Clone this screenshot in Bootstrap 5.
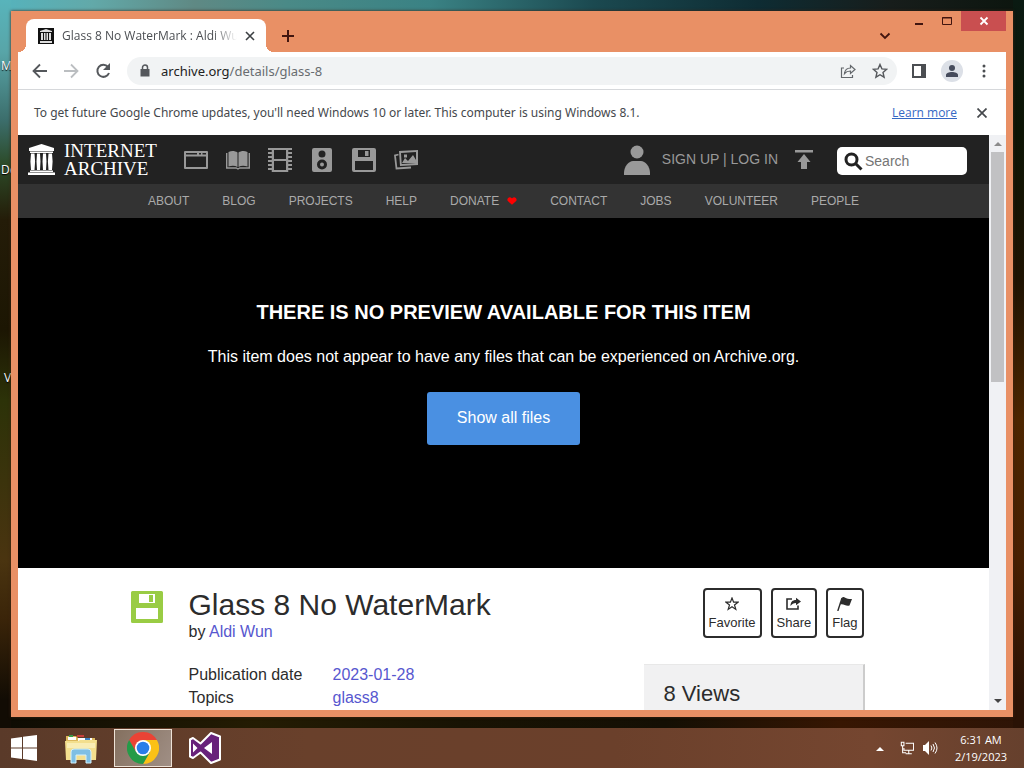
<!DOCTYPE html>
<html lang="en">
<head>
<meta charset="utf-8">
<meta name="viewport" content="width=device-width, initial-scale=1">
<title>Glass 8 No WaterMark : Aldi Wun</title>
<link href="https://cdn.jsdelivr.net/npm/bootstrap@5.3.0/dist/css/bootstrap.min.css" rel="stylesheet">
<style>
  body { font-family: "Liberation Sans", Arial, sans-serif; color: #2c2c2c; }
  svg { display: block; flex: none; }
  button { padding: 0; border: 0; background: none; color: inherit; }
  .ui-text { font-family: "Open Sans", "Segoe UI", sans-serif; font-size: 12px; line-height: 18px; }
  .desktop {
    background:
      linear-gradient(180deg, #58b4bb 0, #58a5a8 52px, #3c6e6c 120px, #2c4a28 165px, #241c08 220px, #1c1603 330px, #2c3208 400px, #4a3410 560px, #3a2409 620px, #120c04 700px) 0 0 / 11px 100% no-repeat,
      linear-gradient(180deg, #0a1a12 0, #0d1505 130px, #1f1302 280px, #4d2600 420px, #482002 560px, #2a1205 700px) 100% 0 / 11px 100% no-repeat,
      linear-gradient(90deg, #55b3bd 0, #62a9a9 9%, #5f8984 19%, #4a8a87 28%, #3a8284 42%, #1b4950 58%, #0e2c33 74%, #171d1b 87%, #0c150e 100%) 0 0 / 100% 12px no-repeat,
      linear-gradient(90deg, #0d0b03, #241c03 25%, #181303 45%, #140f04 65%, #371602 82%, #2e1406);
  }
  .shortcut { left: 1px; color: #fff; text-shadow: 0 1px 1px #000; }
  .app-window { margin: 11px; padding: 0 7px 7px; background: #e99065; box-shadow: 0 0 3px #3b2417; min-height: 0; }
  .title-bar, .tool-bar, .info-bar, .task-bar { flex-shrink: 0; }
  .title-bar { height: 41px; color: #42150f; }
  .browser-tab { width: 240px; height: 33px; margin-left: 8px; padding: 0 11px 0 12px; background: #fff; border-radius: 8px 8px 0 0; color: #4c4f53; }
  .browser-tab::before, .browser-tab::after { content: ""; position: absolute; bottom: 0; width: 8px; height: 8px; }
  .browser-tab::before { left: -8px; background: radial-gradient(circle at 0 0, transparent 8px, #fff 8px); }
  .browser-tab::after { right: -8px; background: radial-gradient(circle at 100% 0, transparent 8px, #fff 8px); }
  .tab-title { margin-left: 8px; white-space: nowrap; overflow: hidden; -webkit-mask-image: linear-gradient(90deg, #000 86%, transparent); mask-image: linear-gradient(90deg, #000 86%, transparent); }
  .tab-search { margin-right: 22px; padding-top: 9px; }
  .caption-buttons { gap: 16px; }
  .caption-buttons svg { margin-top: 5px; }
  .close-window { width: 45px; height: 20px; background: #c94f50; color: #fff; margin-left: -8px; }
  .close-window svg { margin-top: 0; }
  .tool-bar { height: 38px; background: #fff; border-bottom: 1px solid #d6d8db; padding: 0 16px 0 14px; color: #55585c; gap: 15px; }
  .address { height: 28px; background: #f1f3f4; border-radius: 14px; padding: 0 9px 0 12px; font-family: "Noto Sans", "Segoe UI", sans-serif; font-size: 13px; }
  .address input { border: 0; background: none; width: 100%; position: relative; color: transparent; caret-color: #222; outline: 0; padding: 0; }
  .address-label { left: 34px; top: 5px; pointer-events: none; color: #686c70; }
  .address-label span { color: #222; }
  .avatar { width: 22px; height: 22px; background: #dce0e7; }
  .info-bar { height: 45px; background: #fff; color: #45484c; padding: 0 19px 0 16px; }
  .info-bar span { font-family: "Noto Sans", "Segoe UI", sans-serif; }
  .info-bar a { color: #3568c4; }
  .page-view { min-height: 0; background: #fff; }
  .scroll-track { width: 17px; background: #f0f1f4; color: #555; padding: 6px 2px; }
  .scroll-thumb { height: 230px; background: #c1c1c3; margin-top: 5px; }
  .top-nav { height: 49px; background: #222; color: #999; padding: 0 22px 0 10px; }
  .wordmark { font-family: "Liberation Serif", "Times New Roman", serif; font-size: 19px; line-height: 18px; color: #fff; margin-left: 9px; }
  .media-links { gap: 18px; margin-left: 27px; }
  .media-links a, .top-nav a { color: #999; text-decoration: none; }
  .media-links svg { fill: #999; }
  .login { font-size: 14px; margin-left: 12px; }
  .search-box { width: 130px; height: 28px; background: #fff; border-radius: 5px; margin-left: 23px; padding: 0 5px 0 7px; margin-top: 3px; }
  .search-box input { border: 0; width: 100%; min-width: 0; font-size: 14px; padding: 0; outline: 0; margin-left: 2px; }
  .search-box input::placeholder { color: #757575; opacity: 1; }
  .sub-nav { height: 34px; background: #333; gap: 33px; font-size: 12px; }
  .sub-nav a { color: #aaa; text-decoration: none; }
  .theatre { height: 350px; background: #000; color: #fff; padding-top: 81px; }
  .theatre h2 { font-size: 20px; line-height: 26px; font-weight: 700; margin-bottom: 20px; }
  .theatre p { font-size: 16px; line-height: 24px; margin-bottom: 23px; }
  .show-files { background: #4a90e2; border-radius: 3px; padding: 13px 30px 15px; line-height: 25px; height: 53px; color: #fff; }
  .item-wrap { max-width: 750px; margin: 0 auto; padding: 20px 14px 0 2px; }
  .item-wrap a { color: #5757cf; text-decoration: none; }
  .item-icon { margin-top: 3px; margin-right: 26px; }
  .item-wrap h1 { font-size: 30px; line-height: 34px; margin: 0; font-weight: 400; }
  .byline { line-height: 20px; margin-bottom: 21px; }
  .facts { display: grid; grid-template-columns: 144px 1fr; line-height: 23px; }
  .facts dt, .facts dd { font-weight: 400; margin: 0; }
  .side { width: 221px; }
  .side-actions { gap: 9px; margin-right: 1px; }
  .act { border: 2px solid #2c2c2c; border-radius: 4px; height: 50px; padding: 2px 4px 0; font-size: 13px; line-height: 16px; gap: 4px; }
  .views { margin-top: 26px; background: #f1f1f2; border-right: 2px solid #ccc; border-top: 1px solid #e8e8e8; padding: 16px 20px 40px; font-size: 22px; line-height: 26px; }
  .task-bar { height: 40px; background: linear-gradient(90deg, #5a3a29, #69402b 30%, #6b402b 60%, #754630 85%, #66402d); color: #fff; padding: 1px 16px 1px 11px; }
  .task-active { width: 58px; height: 38px; background: linear-gradient(120deg, #84705f, #a08f85); border: 1px solid #eee2d6; margin: 0 17px; }
  .clock { width: 54px; font-size: 11px; line-height: 17px; margin-left: 16px; white-space: nowrap; }
</style>
</head>
<body>
<div class="desktop vh-100 d-flex flex-column overflow-hidden position-relative">
  <span class="shortcut ui-text position-absolute" style="top:57px">My</span>
  <span class="shortcut ui-text position-absolute" style="top:161px">De</span>
  <span class="shortcut ui-text position-absolute" style="top:369px">&nbsp;VS</span>

  <main class="app-window flex-fill d-flex flex-column position-relative">
    <header class="title-bar d-flex">
      <div class="browser-tab ui-text d-flex align-items-center align-self-end position-relative">
        <svg width="16" height="16" viewBox="0 0 16 16"><path fill="#111" d="M0 0h16v16H0z"/><path fill="#ddd" d="M8 1l6 2v1H2V3zM2 13h12v2H2zM3 5h2v7H3zM6 5h1.500v7H6zM8.500 5H10v7H8.500zM11 5h2v7h-2z"/></svg>
        <span class="tab-title flex-fill">Glass 8 No WaterMark : Aldi Wun</span>
        <button aria-label="Close tab" class="ms-2"><svg width="10" height="10" viewBox="0 0 10 10"><path d="M1 1l8 8M9 1L1 9" stroke="#3c4043" stroke-width="1.600"/></svg></button>
      </div>
      <button aria-label="New tab" class="align-self-end mb-2 ms-3"><svg width="12" height="17" viewBox="0 0 12 17"><path d="M6 3v12M0 9h12" stroke="#42150f" stroke-width="2"/></svg></button>
      <button aria-label="Search tabs" class="tab-search ms-auto"><svg width="12" height="8" viewBox="0 0 12 8"><path d="M1.500 1.500L6 6l4.500-4.500" fill="none" stroke="#42150f" stroke-width="1.800"/></svg></button>
      <div class="caption-buttons d-flex align-items-start">
        <button aria-label="Minimize"><svg width="12" height="10" viewBox="0 0 12 10"><path fill="#42150f" d="M2 7h8v2H2z"/></svg></button>
        <button aria-label="Maximize"><svg width="12" height="10" viewBox="0 0 12 10"><path d="M1.500 1.500h9v7h-9zM1 2h10" fill="none" stroke="#42150f"/></svg></button>
        <button aria-label="Close" class="close-window d-flex align-items-center justify-content-center"><svg width="10" height="10" viewBox="0 0 10 10"><path d="M1.500 1.500l7 7M8.500 1.500l-7 7" stroke="#fff" stroke-width="1.800"/></svg></button>
      </div>
    </header>

    <div class="tool-bar ui-text d-flex align-items-center">
      <button aria-label="Back"><svg width="16" height="16" viewBox="0 0 16 16"><path d="M15 8H2M8 1.500L1.500 8 8 14.500" fill="none" stroke="#55585c" stroke-width="1.800"/></svg></button>
      <button aria-label="Forward"><svg width="16" height="16" viewBox="0 0 16 16"><path d="M1 8h13M8 1.500L14.500 8 8 14.500" fill="none" stroke="#bbbec1" stroke-width="1.800"/></svg></button>
      <button aria-label="Reload"><svg width="18" height="16" viewBox="0 0 18 16"><path d="M15 10A6 6 0 1 1 14 4" fill="none" stroke="#55585c" stroke-width="2"/><path d="M16 0v7H9z" fill="#55585c"/></svg></button>
      <div class="address flex-fill d-flex align-items-center position-relative">
        <svg width="12" height="14" viewBox="0 0 12 14"><path d="M1.500 5h9v7.500h-9z" fill="#55585c"/><path d="M3.500 5V3.500a2.500 2.500 0 0 1 5 0V5" fill="none" stroke="#55585c" stroke-width="1.500"/></svg>
        <label for="url" class="address-label position-absolute"><span>archive.org</span>/details/glass-8</label>
        <input id="url" type="text" class="ms-2">
        <svg width="16" height="16" viewBox="0 0 16 16"><path d="M4 5H1.500v9.500h11V12M4.500 10.500c.5-4 2.500-5.500 6-5.500V2.500l4.500 4-4.500 4V8c-3 0-4.500.7-6 2.500z" fill="none" stroke="#63676b" stroke-width="1.200"/></svg>
        <svg class="ms-3" width="16" height="16" viewBox="0 0 16 16"><path d="M8 1.500l1.900 4.400 4.800.4L11 9.500l1.100 4.700L8 11.700l-4.100 2.500L5 9.500 1.300 6.300l4.800-.4z" fill="none" stroke="#55585c" stroke-width="1.400"/></svg>
      </div>
      <button aria-label="Side panel"><svg width="14" height="14" viewBox="0 0 14 14"><path d="M0 0h14v14H0zM2 2v10h7V2z" fill-rule="evenodd" fill="#4b4e52"/></svg></button>
      <button aria-label="Profile" class="avatar rounded-circle d-flex align-items-center justify-content-center"><svg width="12" height="12" viewBox="0 0 12 12" fill="#454b5c"><circle cx="6" cy="3" r="3"/><path d="M0 12v-2c0-4 12-4 12 0v2z"/></svg></button>
      <button aria-label="Menu" class="px-1"><svg width="4" height="14" viewBox="0 0 4 14" fill="#4b4e52"><circle cx="2" cy="2" r="1.500"/><circle cx="2" cy="7" r="1.500"/><circle cx="2" cy="12" r="1.500"/></svg></button>
    </div>

    <div class="info-bar ui-text d-flex align-items-center">
      <span>To get future Google Chrome updates, you'll need Windows 10 or later. This computer is using Windows 8.1.</span>
      <a href="#" class="ms-auto">Learn more</a>
      <button aria-label="Dismiss" class="ms-3 ps-1"><svg width="10" height="10" viewBox="0 0 10 10"><path d="M.5.500l9 9M9.500.500l-9 9" stroke="#45484c" stroke-width="1.700"/></svg></button>
    </div>

    <div class="page-view flex-fill d-flex">
      <div class="flex-fill overflow-hidden">
        <nav class="top-nav d-flex align-items-center">
          <svg width="27" height="31" viewBox="0 0 27 31" fill="#fff"><path d="M13.500 0L26 4v3H1V4zM2 7.500h23V9H2zM2 26.500h23V28H2zM0 28.500h27V31H0zM3 9.500h3.500l.6 8-.6 8.500H3l-.6-8.500zM9 9.500h3l.5 8-.5 8.500H9l-.5-8.500zM15 9.500h3l.5 8-.5 8.500h-3l-.5-8.500zM20.500 9.500H24l.6 8-.6 8.500h-3.500l-.6-8.500z"/></svg>
          <div class="wordmark">INTERNET<br>ARCHIVE</div>
          <div class="media-links d-flex align-items-center">
            <a href="#" aria-label="Web"><svg width="24" height="24" viewBox="0 0 24 24"><path fill-rule="evenodd" d="M1 3h22a1 1 0 0 1 1 1v16a1 1 0 0 1-1 1H1a1 1 0 0 1-1-1V4a1 1 0 0 1 1-1zM2 8.500V19h20V8.500zM2 5v1.500h11V5zM15 5v1.500h2V5zM18.500 5v1.500H22V5z"/></svg></a>
            <a href="#" aria-label="Texts"><svg width="24" height="24" viewBox="0 0 24 24"><path d="M2.500 4C6 2.500 9 3 11.500 4.500V19C9 17.500 6 17.500 2.500 18.500zM12.500 4.500C15 3 18 2.500 21.500 4v14.500c-3.500-1-6.500-1-9 .5z"/><path d="M.7 5v15h9.500l1.800 1 1.800-1h9.500V5" fill="none" stroke="#999" stroke-width="1.400"/></svg></a>
            <a href="#" aria-label="Video"><svg width="24" height="24" viewBox="0 0 24 24"><path fill-rule="evenodd" d="M3 0h18v24H3zM6 2v9h12V2zM6 13v9h12v-9z"/><path d="M2.500 0v24M21.500 0v24" stroke="#222" stroke-width="5"/><path d="M2 0v24M22 0v24" stroke="#999" stroke-width="4" stroke-dasharray="2 2"/><path d="M4.500 0v24M19.500 0v24" stroke="#999" stroke-width="1.500"/></svg></a>
            <a href="#" aria-label="Audio"><svg width="24" height="24" viewBox="0 0 24 24"><path fill-rule="evenodd" d="M4 0h16a2 2 0 0 1 2 2v20a2 2 0 0 1-2 2H4a2 2 0 0 1-2-2V2a2 2 0 0 1 2-2zM12 2.500a3.500 3.500 0 1 0 0 7 3.500 3.500 0 0 0 0-7zM12 11.500a5 5 0 1 0 0 10 5 5 0 0 0 0-10z"/><circle cx="12" cy="16.500" r="2"/></svg></a>
            <a href="#" aria-label="Software"><svg width="24" height="24" viewBox="0 0 24 24"><path fill-rule="evenodd" d="M2 0h20a2 2 0 0 1 2 2v20a2 2 0 0 1-2 2H2a2 2 0 0 1-2-2V2a2 2 0 0 1 2-2zM6 2v7h12V2zM3 13v9h18v-9z"/><path d="M13 3h3.500v5H13z"/></svg></a>
            <a href="#" aria-label="Images"><svg width="24" height="24" viewBox="0 0 24 24"><path fill-rule="evenodd" d="M5 3l19-1v15l-18 1zM7 5l.7 11 14.300-1V4z"/><path d="M8 15l3-5 3 3 5-6 3 5v3zM10 6.500h3v3h-3z"/><path d="M4.500 6.500L1 7.500l1.500 13L17 19.500" fill="none" stroke="#999" stroke-width="1.800"/></svg></a>
          </div>
          <a href="#" aria-label="Account" class="ms-auto"><svg width="26" height="30" viewBox="0 0 26 30" fill="#999"><circle cx="13" cy="7" r="6.500"/><path d="M0 30v-2c0-7 5-12 9-12h8c4 0 9 5 9 12v2z"/></svg></a>
          <span class="login"><a href="#">SIGN UP</a> | <a href="#">LOG IN</a></span>
          <a href="#" aria-label="Upload" class="ms-3"><svg width="20" height="20" viewBox="0 0 20 20" fill="#999"><path d="M1 0h18v2.500H1zM10 4l6.500 8H13v7H7v-7H3.500z"/></svg></a>
          <form class="search-box d-flex align-items-center">
            <svg width="19" height="19" viewBox="0 0 19 19"><circle cx="7.500" cy="7.500" r="5.500" fill="none" stroke="#222" stroke-width="3"/><path d="M11.500 11.500l6 6" stroke="#222" stroke-width="3"/></svg>
            <input type="search" placeholder="Search" aria-label="Search">
          </form>
        </nav>
        <nav class="sub-nav d-flex justify-content-center align-items-center">
          <a href="#">ABOUT</a><a href="#">BLOG</a><a href="#">PROJECTS</a><a href="#">HELP</a>
          <a href="#" class="d-flex align-items-center">DONATE <svg class="ms-2" width="10" height="10" viewBox="0 0 12 10"><path fill="#f00" d="M6 9.500L1 5C-.5 3 1.500.500 3.500.500 5 .5 6 2 6 2s1-1.500 2.500-1.500c2 0 4 2.500 2.500 4.500z"/></svg></a>
          <a href="#">CONTACT</a><a href="#">JOBS</a><a href="#">VOLUNTEER</a><a href="#">PEOPLE</a>
        </nav>
        <section class="theatre text-center">
          <h2>THERE IS NO PREVIEW AVAILABLE FOR THIS ITEM</h2>
          <p>This item does not appear to have any files that can be experienced on Archive.org.</p>
          <button class="show-files">Show all files</button>
        </section>
        <section class="item-wrap d-flex">
          <svg class="item-icon" width="32" height="32" viewBox="0 0 32 32"><path fill="#9c4" fill-rule="evenodd" d="M1.500 0h29A1.500 1.500 0 0 1 32 1.500v29a1.500 1.500 0 0 1-1.500 1.500h-29A1.500 1.500 0 0 1 0 30.500v-29A1.500 1.500 0 0 1 1.500 0zM8 3v9h16V3zM5 17v11h22V17z"/><path fill="#9c4" d="M18 4h4v7h-4z"/></svg>
          <div class="flex-fill">
            <h1>Glass 8 No WaterMark</h1>
            <div class="byline">by <a href="#">Aldi Wun</a></div>
            <dl class="facts">
              <dt>Publication date</dt><dd><a href="#">2023-01-28</a></dd>
              <dt>Topics</dt><dd><a href="#">glass8</a></dd>
            </dl>
          </div>
          <aside class="side">
            <div class="side-actions d-flex justify-content-end">
              <button class="act d-flex flex-column align-items-center justify-content-center"><svg width="14" height="14" viewBox="0 0 14 14"><path d="M7 1l1.600 4.200h4.400L9.500 8l1.300 4.400L7 9.800l-3.800 2.600L4.500 8 1 5.200h4.400z" fill="none" stroke="#2c2c2c" stroke-width="1.200"/></svg>Favorite</button>
              <button class="act d-flex flex-column align-items-center justify-content-center"><svg width="15" height="14" viewBox="0 0 15 14"><path d="M6 2H1v10h11V8.500" fill="none" stroke="#2c2c2c" stroke-width="1.600"/><path fill="#2c2c2c" d="M4.500 9c0-4 2-6 5.500-6V.800L15 4.500l-5 3.700V6C7.500 6 6 7 4.500 9z"/></svg>Share</button>
              <button class="act d-flex flex-column align-items-center justify-content-center"><svg width="15" height="14" viewBox="0 0 15 14"><path d="M5 1L.800 14" stroke="#2c2c2c" stroke-width="1.400"/><path fill="#2c2c2c" d="M5.500 0c3 0 4 2.500 9.500 2l-2.500 6.500C8.500 9.500 7 6.500 3 7.500z"/></svg>Flag</button>
            </div>
            <div class="views">8 Views</div>
          </aside>
        </section>
      </div>
      <div class="scroll-track d-flex flex-column" aria-hidden="true">
        <svg class="align-self-center" width="8" height="6"><path fill="#8b8b8b" d="M0 5l4-4 4 4z"/></svg>
        <div class="scroll-thumb"></div>
        <svg class="align-self-center mt-auto" width="8" height="6"><path fill="#444" d="M0 1l4 4 4-4z"/></svg>
      </div>
    </div>
  </main>

  <footer class="task-bar d-flex align-items-center">
    <button aria-label="Start"><svg width="26" height="26" viewBox="0 0 26 26" fill="#fff"><path d="M0 3.500L11 2v10.500H0zM12 1.800L26 0v12.500H12zM0 13.500h11V24L0 22.500zM12 13.500h14V26l-14-1.900z"/></svg></button>
    <button aria-label="File Explorer" class="ms-4 ps-1"><svg width="32" height="32" viewBox="0 0 32 32"><path fill="#dcb85c" d="M1 4h10l2 2h17v22H1z"/><path fill="#fff" d="M3 5h8v3H3zM13 6h14v3H13z"/><path fill="#3a9b4a" d="M4 3h4v2H4z"/><path fill="#c9403a" d="M12 3h7v2h-7z"/><path fill="#3c7fc0" d="M20 6h5v2h-5z"/><path fill="#f3df8e" d="M0 9h13l2-1h17l-1 20H1z"/><path fill="#f9edb5" d="M2 11h28v5H2z"/><path fill="#7ebfe4" stroke="#d3f0fb" d="M6 31V20q0-3 3-3h14q3 0 3 3v11h-5v-8H11v8z"/></svg></button>
    <button aria-label="Google Chrome" class="task-active d-flex align-items-center justify-content-center"><svg width="32" height="32" viewBox="0 0 32 32"><path fill="#ea4335" d="M2.140 8A16 16 0 0 1 29.860 8H16l-7 12z"/><path fill="#fbc116" d="M29.860 8A16 16 0 0 1 16 32l6.930-12L16 8z"/><path fill="#259b48" d="M2.140 8A16 16 0 0 0 16 32l6.930-12H9.070z"/><circle cx="16" cy="16" r="8" fill="#fff"/><circle cx="16" cy="16" r="6.300" fill="#2b7de9"/></svg></button>
    <button aria-label="Visual Studio"><svg width="32" height="32" viewBox="0 0 32 32"><path d="M22 1l9 3.500v23L22 31 11.500 20.500 4 26l-3-1.500v-17L4 6l7.500 5.500z" fill="#68217a" stroke="#fff" stroke-width="2" stroke-linejoin="round"/><path fill="#fff" d="M23 10v12l-8-6zM4 11.500L8.500 16 4 20.500z"/></svg></button>
    <button aria-label="Show hidden icons" class="ms-auto"><svg width="8" height="5"><path fill="#fff" d="M0 5l4-4 4 4z"/></svg></button>
    <svg class="ms-3" width="14" height="16" viewBox="0 0 16 16"><path d="M6.500 2.500h9v8h-11V8M10 11v3M6.500 14.500h7M1.500 1.500h3v4h-3zM3 6v7.500h4" fill="none" stroke="#fff" stroke-width="1.200"/></svg>
    <svg class="ms-2" width="16" height="16" viewBox="0 0 16 16"><path fill="#fff" d="M1 5h2l4-4v14l-4-4H1z"/><path d="M9 5.500q1.800 2.500 0 5M11 4q3 4 0 8M13 2.500q4 5.500 0 11" fill="none" stroke="#fff"/></svg>
    <div class="clock ui-text text-center">6:31 AM<br>2/19/2023</div>
  </footer>
</div>
<script src="https://cdn.jsdelivr.net/npm/bootstrap@5.3.0/dist/js/bootstrap.bundle.min.js"></script>
</body>
</html>
